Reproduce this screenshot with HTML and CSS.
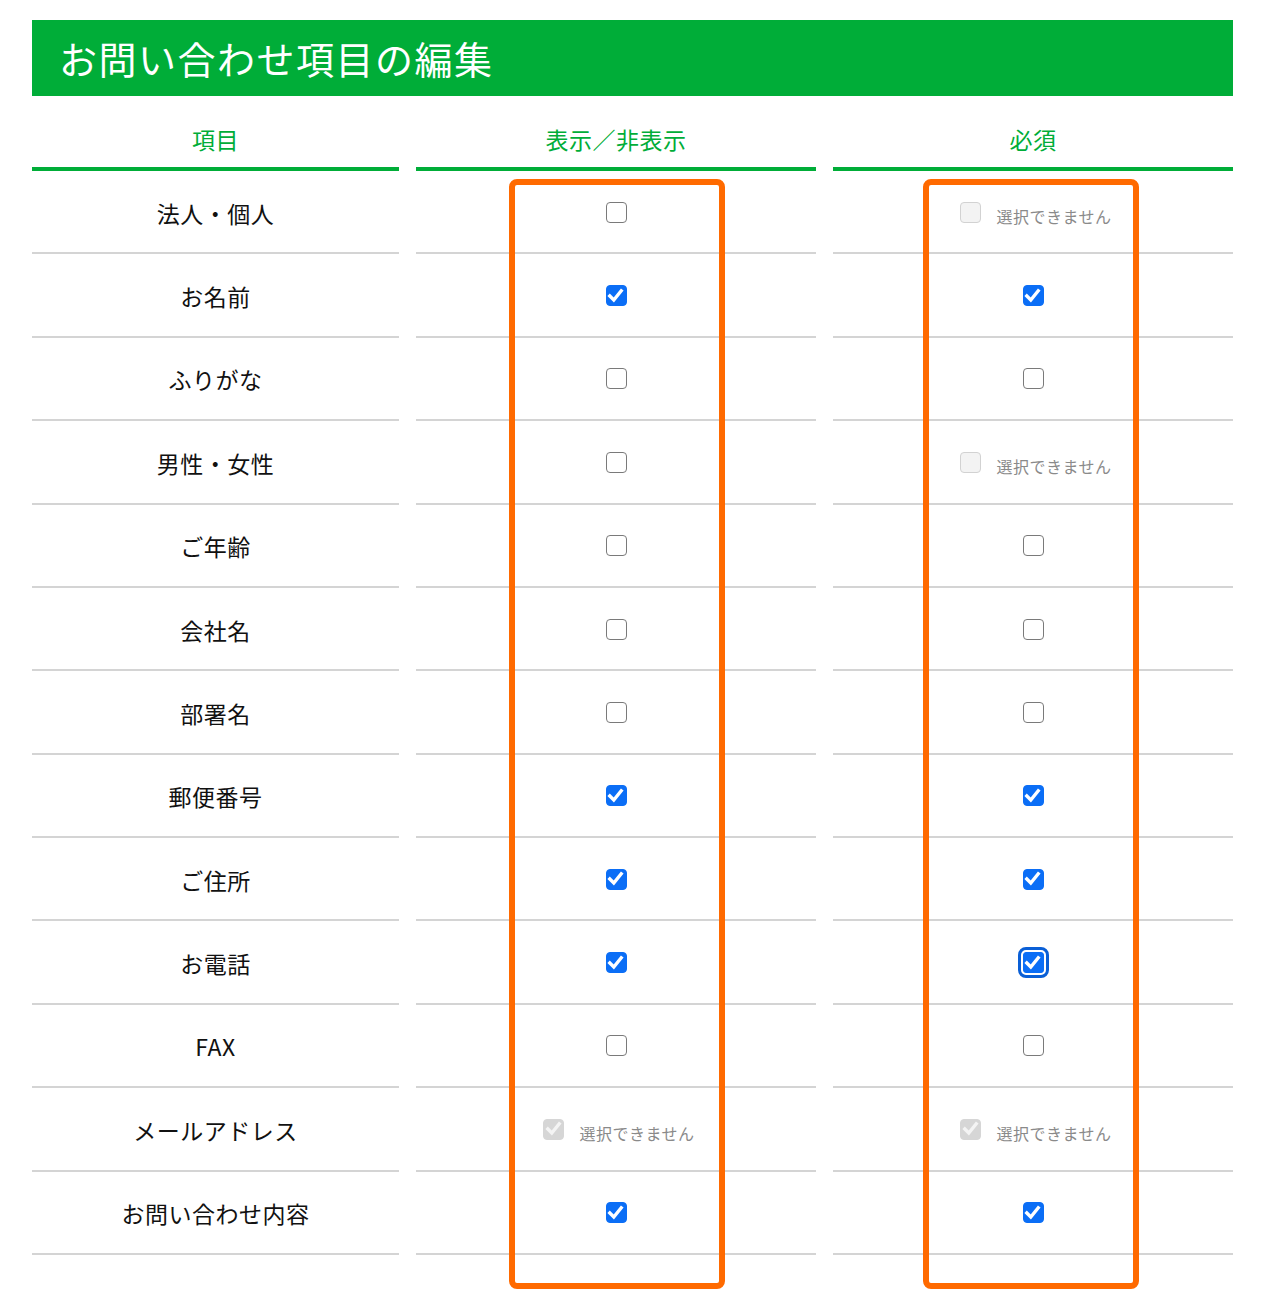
FILE: index.html
```html
<!DOCTYPE html>
<html lang="ja">
<head>
<meta charset="utf-8">
<title>お問い合わせ項目の編集</title>
<link rel="stylesheet" href="styles.css">
</head>
<body>
<div class="page">
  <h1 class="title">お問い合わせ項目の編集</h1>
  <div class="table">
    <div class="th">項目</div>
    <div class="th">表示／非表示</div>
    <div class="th">必須</div>

    <div class="td name">法人・個人</div>
    <div class="td"><span class="cb"></span></div>
    <div class="td note"><span class="cb disabled"></span><span class="na">選択できません</span></div>

    <div class="td name">お名前</div>
    <div class="td"><span class="cb checked"><svg viewBox="0 0 21 21"><path d="M4.8 11 L8.8 15 L16.2 5.8"/></svg></span></div>
    <div class="td"><span class="cb checked"><svg viewBox="0 0 21 21"><path d="M4.8 11 L8.8 15 L16.2 5.8"/></svg></span></div>

    <div class="td name">ふりがな</div>
    <div class="td"><span class="cb"></span></div>
    <div class="td"><span class="cb"></span></div>

    <div class="td name">男性・女性</div>
    <div class="td"><span class="cb"></span></div>
    <div class="td note"><span class="cb disabled"></span><span class="na">選択できません</span></div>

    <div class="td name">ご年齢</div>
    <div class="td"><span class="cb"></span></div>
    <div class="td"><span class="cb"></span></div>

    <div class="td name">会社名</div>
    <div class="td"><span class="cb"></span></div>
    <div class="td"><span class="cb"></span></div>

    <div class="td name">部署名</div>
    <div class="td"><span class="cb"></span></div>
    <div class="td"><span class="cb"></span></div>

    <div class="td name">郵便番号</div>
    <div class="td"><span class="cb checked"><svg viewBox="0 0 21 21"><path d="M4.8 11 L8.8 15 L16.2 5.8"/></svg></span></div>
    <div class="td"><span class="cb checked"><svg viewBox="0 0 21 21"><path d="M4.8 11 L8.8 15 L16.2 5.8"/></svg></span></div>

    <div class="td name">ご住所</div>
    <div class="td"><span class="cb checked"><svg viewBox="0 0 21 21"><path d="M4.8 11 L8.8 15 L16.2 5.8"/></svg></span></div>
    <div class="td"><span class="cb checked"><svg viewBox="0 0 21 21"><path d="M4.8 11 L8.8 15 L16.2 5.8"/></svg></span></div>

    <div class="td name">お電話</div>
    <div class="td"><span class="cb checked"><svg viewBox="0 0 21 21"><path d="M4.8 11 L8.8 15 L16.2 5.8"/></svg></span></div>
    <div class="td"><span class="cb checked focused"><svg viewBox="0 0 21 21"><path d="M4.8 11 L8.8 15 L16.2 5.8"/></svg></span></div>

    <div class="td name">FAX</div>
    <div class="td"><span class="cb"></span></div>
    <div class="td"><span class="cb"></span></div>

    <div class="td name">メールアドレス</div>
    <div class="td note"><span class="cb disabled checked-dis"><svg viewBox="0 0 21 21"><path d="M4.8 11 L8.8 15 L16.2 5.8"/></svg></span><span class="na">選択できません</span></div>
    <div class="td note"><span class="cb disabled checked-dis"><svg viewBox="0 0 21 21"><path d="M4.8 11 L8.8 15 L16.2 5.8"/></svg></span><span class="na">選択できません</span></div>

    <div class="td name">お問い合わせ内容</div>
    <div class="td"><span class="cb checked"><svg viewBox="0 0 21 21"><path d="M4.8 11 L8.8 15 L16.2 5.8"/></svg></span></div>
    <div class="td"><span class="cb checked"><svg viewBox="0 0 21 21"><path d="M4.8 11 L8.8 15 L16.2 5.8"/></svg></span></div>
  </div>
  <div class="highlight hl-show"></div>
  <div class="highlight hl-required"></div>
</div>
</body>
</html>
```

FILE: styles.css
```css
* {
  box-sizing: border-box;
}

html, body {
  margin: 0;
  padding: 0;
  background: #ffffff;
}

body {
  font-family: "Noto Sans CJK JP", "Noto Sans", sans-serif;
  color: #111111;
}

.page {
  position: relative;
  width: 1264px;
  padding: 20px 31px 40px 32px;
}

.title {
  margin: 0;
  height: 76px;
  background: #00ad38;
  color: #ffffff;
  font-size: 38px;
  font-weight: 400;
  letter-spacing: 1.5px;
  line-height: 76px;
  padding-left: 27px;
}

.table {
  display: grid;
  grid-template-columns: 367px 400px 400px;
  column-gap: 17px;
}

.th {
  height: 75px;
  padding-top: 27px;
  border-bottom: 4px solid #00ad38;
  color: #00ad38;
  font-size: 23px;
  letter-spacing: 0.5px;
  line-height: 32px;
  text-align: center;
}

.td {
  height: 83.38px;
  border-bottom: 2px solid #d4d4d4;
  display: flex;
  align-items: center;
  justify-content: center;
  font-size: 23px;
  letter-spacing: 0.5px;
  line-height: 1;
}

.td.note {
  padding-left: 6px;
}

.name {
  padding-top: 3px;
}

.cb {
  position: relative;
  display: inline-flex;
  width: 21px;
  height: 21px;
  margin-top: 1px;
  border: 1.5px solid #7a7a7a;
  border-radius: 4px;
  background: #ffffff;
  flex: none;
}

.cb svg {
  position: absolute;
  left: -1.5px;
  top: -1.5px;
  width: 21px;
  height: 21px;
}

.cb svg path {
  fill: none;
  stroke: #ffffff;
  stroke-width: 3.4;
  stroke-linecap: square;
  stroke-linejoin: miter;
}

.cb.checked {
  background: #0b6ef6;
  border-color: #0b6ef6;
}

.cb.focused {
  outline: 3px solid #0a5fd6;
  outline-offset: 2px;
  border-radius: 3px;
}

.cb.disabled {
  background: #f3f3f3;
  border-color: #d2d2d2;
}

.cb.checked-dis {
  background: #d6d6d6;
  border-color: #d6d6d6;
}

.cb.checked-dis svg path {
  stroke: #f4f4f4;
}

.na {
  margin-left: 15px;
  padding-top: 8px;
  font-size: 16px;
  letter-spacing: 0.5px;
  color: #8a8a8a;
}

.highlight {
  position: absolute;
  top: 179px;
  width: 216px;
  height: 1110px;
  border: 6px solid #ff6a00;
  border-radius: 8px;
  pointer-events: none;
}

.hl-show {
  left: 509px;
}

.hl-required {
  left: 923px;
}
```
